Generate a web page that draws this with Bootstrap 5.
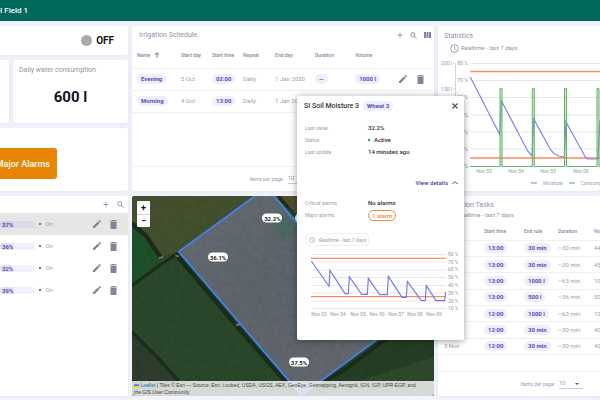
<!DOCTYPE html>
<html lang="en">
<head>
<meta charset="utf-8">
<meta name="viewport" content="width=device-width, initial-scale=1">
<title>SI Field 1</title>
<link href="https://cdn.jsdelivr.net/npm/bootstrap@5.3.0/dist/css/bootstrap.min.css" rel="stylesheet">
<style>
  body { font: 6px/8px Roboto, sans-serif; color: #9c9eb0; background: #f3f4fa; height: 100vh; min-height: 400px; overflow: hidden; }
  svg { display: block; flex: none; }
  .topbar { height: 21px; background: #00695c; color: #fff; font-size: 8px; font-weight: 500; }
  .board { display: grid; flex: 1; min-height: 0; grid-template-columns: 128fr 302fr 162fr; grid-template-rows: 165fr 200fr; gap: 5px 4px; padding: 5px 0 4px; }
  .board > * { min-width: 0; min-height: 0; }
  .panel { background: #fff; border-radius: 3px; box-shadow: 0 1px 4px rgba(70,80,150,.09); overflow: hidden; white-space: nowrap; min-width: 0; }
  .panel.open-left { border-top-left-radius: 0; border-bottom-left-radius: 0; }
  .heading { font-size: 7px; line-height: 10px; font-weight: 400; margin: 0; color: #9294a6; }
  .period { font-size: 6px; line-height: 10px; color: #9294a6; gap: 2px; }
  .ink { color: #15151a; }
  .state { font-size: 10px; line-height: 12px; font-weight: 700; }
  .state-card { padding-right: 14px; }
  .figure-card { padding: 5px 6px 0; }
  .figure-big { font-size: 15px; line-height: 18px; font-weight: 700; margin-top: 13px; }
  .knob { width: 11px; height: 11px; border-radius: 50%; background: #a9a9a9; }
  .summary { display: grid; grid-template-rows: 29fr 63fr 63fr; gap: 5px; }
  .pair { display: grid; grid-template-columns: 9fr 115fr; gap: 4px; min-width: 0; }
  .alarm-btn { background: #e88504; color: #fff; font-size: 9px; line-height: 10px; font-weight: 500; width: 57px; height: 31px; border: 0; border-radius: 0 3px 3px 0; padding: 0 7px 0 0; display: flex; align-items: center; justify-content: flex-end; }
  .icon-btn { border: 0; background: none; padding: 0; color: #7f8699; line-height: 1; display: inline-flex; }
  .grid-table { width: 100%; table-layout: fixed; border-collapse: collapse; margin: 0; }
  .grid-table th { font-weight: 500; font-size: 5px; color: #8688a0; padding: 0; }
  .grid-table td { padding: 0; }
  .grid-table tr { border-bottom: 1px solid #eff0f4; }
  .sched { margin-top: 3px; }
  .sched thead tr { height: 25px; }
  .sched tbody tr { height: 22px; }
  .sched th:first-child, .sched td:first-child { padding-left: 5px; }
  .row-tools { margin-left: -3px; gap: 9px; }
  .tools { gap: 7px; padding: 4px 3px 0 7px; }
  .tasks { width: 200px; height: 132px; margin-top: 3px; }
  .tasks thead tr { height: 17px; }
  .tasks th:first-child, .tasks td:first-child { padding-left: 6px; }
  .tag { display: inline-block; background: #efeefc; color: #5650b4; font-weight: 700; line-height: 10px; border-radius: 5px; padding: 0 4px; }
  .sched .tag, .tasks .tag { min-width: 11px; text-align: center; }
  .pager { border-top: 1px solid #eff0f4; font-size: 5px; padding: 6px 17px 7px 0; }
  .pager.centered { padding-right: 5px; }
  .pager select { font-size: 6px; line-height: 8px; color: inherit; background: none; border: 0; border-bottom: 1px solid #c9cad3; border-radius: 0; appearance: none; padding: 0; width: 24px; height: 11px; }
  .caret { width: 0; height: 0; border: 2px solid transparent; border-top-color: #555; margin: 2px 4px 0 -8px; }
  .zone { height: 22px; padding: 0 10px 0 0; }
  .zone.current { background: #e6e6e6; }
  .meter-box { width: 30%; margin-right: 4px; }
  .level { appearance: none; display: block; width: 100%; height: 7px; border: 0; border-radius: 3px; background: #efeefc; overflow: hidden; }
  .level::-webkit-progress-bar { background: #f1f0fd; }
  .level::-webkit-progress-value { background: #e2e0f8; }
  .current .level::-webkit-progress-bar { background: #dcdbea; }
  .current .level::-webkit-progress-value { background: #cfcee6; }
  .level-text { left: 2px; top: 0; line-height: 7px; font-weight: 700; color: #5650b4; }
  .dot { width: 2px; height: 2px; background: #2e9e50; }
  .plot { font-size: 5px; fill: #9899a8; }
  .stat-head { padding: 5px 0 2px 6px; }
  .legend-row { font-size: 5px; padding: 2px 0 0 93px; gap: 6px; }
  .fieldmap { border-radius: 3px; overflow: hidden; background: #2a4429; }
  .fieldmap > svg { width: 100%; height: 100%; }
  .zoomer { left: 5px; top: 5px; width: 13px; background: #fff; border-radius: 1px; }
  .zoomer button { border: 0; background: none; padding: 0; height: 13px; font-weight: 700; font-size: 9px; line-height: 12px; color: #111; }
  .zoomer button + button { border-top: 1px solid #ccc; }
  .pin { background: #fff; color: #222; font-weight: 700; border-radius: 5px; width: 20px; line-height: 9px; text-align: center; transform: translate(-50%, -50%); }
  .credits { background: rgba(255,255,255,.8); color: #444; font: 5px/7px "Liberation Sans", sans-serif; padding: 1px 8px 0 2px; left: 0; right: 0; bottom: 0; }
  .credits a { color: #0078a8; text-decoration: none; }
  .popup { left: 297px; top: 96px; width: 167px; height: 244px; background: #fff; border-radius: 2px; box-shadow: 0 1px 7px rgba(0,0,0,.4); padding: 4px 6px 0 7px; }
  .popup h2 { font-size: 7px; line-height: 12px; font-weight: 500; margin: 0; color: #33333a; }
  .facts { display: grid; grid-template-columns: 63px 1fr; grid-auto-rows: 12px; align-items: center; margin: 0 0 0 1px; }
  .facts dt { font-weight: 400; font-size: 5px; }
  .facts dd { margin: 0; font-weight: 500; color: #2b2b31; }
  .details { color: #4540a0; font-weight: 500; text-decoration: none; line-height: 12px; }
  .alarm-tag { display: inline-block; border: 1px solid #ee8a3c; color: #ee8a3c; border-radius: 6px; line-height: 9px; padding: 0 3px; font-weight: 500; }
  .range { border: 1px solid #f0f0f4; border-radius: 3px; background: #fff; color: inherit; height: 13px; padding: 0 2px; line-height: 8px; font-size: 5px; margin-left: 2px; }
  .s1 { margin-top: 10px; } .s2 { margin-top: 19px; } .s3 { margin-top: 8px; } .s4 { margin-top: 12px; }
</style>
<script src="https://cdn.jsdelivr.net/npm/bootstrap@5.3.0/dist/js/bootstrap.bundle.min.js"></script>
</head>
<body class="d-flex flex-column">
<svg width="0" height="0" class="position-absolute" aria-hidden="true">
  <symbol id="pencil" viewBox="3 3 18 18"><path fill="currentColor" d="M3 17.25V21h3.75L17.81 9.94l-3.75-3.75L3 17.25zM20.71 7.04a1 1 0 0 0 0-1.41l-2.34-2.34a1 1 0 0 0-1.41 0l-1.83 1.83 3.75 3.75 1.83-1.83z"/></symbol>
  <symbol id="trash" viewBox="3 3 18 18"><path fill="currentColor" d="M6 19c0 1.100.9 2 2 2h8c1.100 0 2-.9 2-2V7H6v12zM19 4h-3.500l-1-1h-5l-1 1H5v2h14V4z"/></symbol>
  <symbol id="plus" viewBox="4 4 16 16"><path fill="currentColor" d="M19 13h-6v6h-2v-6H5v-2h6V5h2v6h6v2z"/></symbol>
  <symbol id="search" viewBox="2 2 19 19"><path fill="currentColor" d="M15.500 14h-.79l-.28-.27A6.470 6.470 0 0 0 16 9.500 6.500 6.500 0 1 0 9.500 16c1.610 0 3.090-.59 4.230-1.570l.27.28v.79l5 4.990L20.490 19l-4.990-5zm-6 0a4.500 4.500 0 1 1 0-9 4.500 4.500 0 0 1 0 9z"/></symbol>
  <symbol id="clock" viewBox="0 0 20 20"><g fill="none" stroke="currentColor" stroke-width="2"><circle cx="10" cy="10" r="8.500"/><path d="M10 5v5.500l4 2.500"/></g></symbol>
</svg>

<header class="topbar d-flex align-items-center flex-shrink-0">I Field 1</header>

<main class="board">
  <section class="summary">
    <div class="panel open-left state-card d-flex align-items-center justify-content-end">
      <span class="knob me-1"></span><span class="state ink">OFF</span>
    </div>
    <div class="pair">
      <div class="panel open-left"></div>
      <div class="panel figure-card">
        <h2 class="heading">Daily water consumption</h2>
        <div class="figure-big ink text-center">600 l</div>
      </div>
    </div>
    <div class="panel open-left d-flex align-items-center pt-2">
      <button class="alarm-btn" type="button">Major Alarms</button>
    </div>
  </section>

  <section class="panel d-flex flex-column">
    <div class="tools d-flex align-items-center">
      <h2 class="heading flex-grow-1">Irrigation Schedule</h2>
      <button class="icon-btn" type="button" aria-label="Add"><svg width="6" height="6"><use href="#plus"/></svg></button>
      <button class="icon-btn" type="button" aria-label="Search"><svg width="7" height="7"><use href="#search"/></svg></button>
      <button class="icon-btn" type="button" aria-label="Columns"><svg width="7" height="6" viewBox="0 0 7 6" fill="currentColor"><path d="M0 0h2v6H0zM2.500 0h2v6h-2zM5 0h2v6H5z"/></svg></button>
    </div>
    <table class="grid-table sched">
      <colgroup><col width="16.200%"><col width="10.300%"><col width="10.300%"><col width="10.600%"><col width="13.200%"><col width="13.300%"><col width="15.600%"><col></colgroup>
      <thead><tr><th><span class="d-inline-flex align-items-center gap-1">Name <svg width="6" height="6" viewBox="0 0 16 16" fill="none" stroke="#55586a" stroke-width="2"><path d="M8 16V2M2 8l6-6 6 6"/></svg></span></th><th>Start day</th><th>Start time</th><th>Repeat</th><th>End day</th><th>Duration</th><th>Volume</th><th></th></tr></thead>
      <tbody>
        <tr><td><span class="tag">Evening</span></td><td>5 Oct</td><td><span class="tag">02:00</span></td><td>Daily</td><td>1 Jan 2030</td><td><span class="tag">—</span></td><td><span class="tag">1000 l</span></td><td><span class="row-tools d-flex"><button class="icon-btn" type="button" aria-label="Edit"><svg width="8" height="8"><use href="#pencil"/></svg></button><button class="icon-btn" type="button" aria-label="Delete"><svg width="9" height="9"><use href="#trash"/></svg></button></span></td></tr>
        <tr><td><span class="tag">Morning</span></td><td>4 Oct</td><td><span class="tag">13:00</span></td><td>Daily</td><td>1 Jan 2030</td><td></td><td></td><td></td></tr>
      </tbody>
    </table>
    <div class="pager centered mt-auto d-flex align-items-center justify-content-center">
      <label for="schedSize" class="me-1">Items per page:</label><select id="schedSize"><option>10</option></select><span class="caret"></span>
    </div>
  </section>

  <section class="panel">
    <h2 class="heading stat-head">Statistics</h2>
    <div class="period d-flex align-items-center ps-2"><svg class="ms-1" width="9" height="9"><use href="#clock"/></svg>Realtime - last 7 days</div>
    <svg class="plot" width="162" height="124" viewBox="438 53 162 124">
      <path d="M470.500 63.500H600M470.500 80.500H600M470.500 97.500H600M470.500 115H600M470.500 132H600M470.500 149H600" stroke="#e8e8ee"/>
      <path d="M453 63.500h2.500V167M453 89h2.500" stroke="#d5d6df" fill="none"/>
      <g text-anchor="end"><text x="452" y="65">200 l</text><text x="452" y="91">150 l</text><text x="468" y="65">80 %</text><text x="468" y="82">70 %</text><text x="468" y="99">60 %</text><text x="468" y="117">50 %</text><text x="468" y="134">40 %</text><text x="468" y="151">30 %</text><text x="468" y="168">20 %</text></g>
      <path d="M470.300 71.500H600M470.300 158H600" stroke="#fb8a5c" stroke-width="1.500"/>
      <path d="M470.300 77L499.700 134.500 501.500 101 527.700 151 532 156 533.700 119 550.700 150 554 153.500 559 156 564.300 157.300 566 122 585.300 157 587.300 159H598L600 120" fill="none" stroke="#8282f0" stroke-width="1.200"/>
      <path d="M470.300 166.500H500V88.500h2v78H532.300V88.500h2v78H564.500V88.500h2v78H597V88.500h2v78h1" fill="#4caf50" fill-opacity=".25" stroke="#61b565"/>
      <g text-anchor="middle"><text x="484" y="173">Nov 03</text><text x="516" y="173">Nov 04</text><text x="548" y="173">Nov 05</text><text x="581" y="173">Nov 06</text></g>
    </svg>
    <div class="legend-row d-flex align-items-center">
      <svg width="6" height="2"><path d="M0 1h6" stroke="#7b7bf0" stroke-width="1"/></svg><span>Moisture</span>
      <svg width="6" height="2"><path d="M0 1h6" stroke="#4caf50" stroke-width="1"/></svg><span>Consumption</span>
    </div>
  </section>

  <section class="panel open-left">
    <div class="d-flex align-items-center justify-content-end pe-1 pt-1 pb-1">
      <button class="icon-btn me-2" type="button" aria-label="Add"><svg width="6" height="9"><use href="#plus"/></svg></button>
      <button class="icon-btn" type="button" aria-label="Search"><svg width="7" height="9"><use href="#search"/></svg></button>
    </div>
    <div id="zones"></div>
  </section>

  <section class="fieldmap position-relative">
    <svg viewBox="6 78 906 600" preserveAspectRatio="none">
      <defs>
        <linearGradient id="soil" x1="0" y1="0" x2="1" y2="1"><stop offset="0" stop-color="#646c74"/><stop offset=".4" stop-color="#5e646c"/><stop offset="1" stop-color="#63676d"/></linearGradient>
        <pattern id="rows" width="9" height="40" patternUnits="userSpaceOnUse" patternTransform="rotate(-34)"><path d="M2 0v40" stroke="#fff" stroke-opacity=".05" stroke-width="2"/><path d="M6 0v40" stroke="#000" stroke-opacity=".06" stroke-width="2"/></pattern>
        <pattern id="crop" width="11" height="40" patternUnits="userSpaceOnUse" patternTransform="rotate(55)"><path d="M2 0v40" stroke="#fff" stroke-opacity=".02" stroke-width="4"/></pattern>
        <radialGradient id="wet"><stop offset="0" stop-color="#3d6b59" stop-opacity=".8"/><stop offset="1" stop-color="#3d6b59" stop-opacity="0"/></radialGradient>
        <filter id="grain"><feTurbulence type="fractalNoise" baseFrequency=".06" numOctaves="4"/><feColorMatrix values="0 0 0 0 0  0 0 0 0 0  0 0 0 0 0  1.200 0 0 0 -.45"/></filter>
      </defs>
      <rect x="6" y="78" width="906" height="600" fill="#294629"/>
      <path d="M6 78H375L150 240 90 265 6 160z" fill="#424f2d"/>
      <path d="M6 165L95 265 6 345z" fill="#1c4f27"/>
      <path d="M6 488L150 640V678H6z" fill="#2c3b2b"/>
      <path d="M432 78H912V480L774 485z" fill="#524d2e"/>
      <path d="M500 678L740 510H912V678z" fill="#233c23"/>
      <path d="M545 678L912 560V678z" fill="#2d472a"/>
      <path d="M6 78H912V678H6z" fill="url(#crop)"/>
      <g fill="none" stroke="#1a2d1a"><path d="M6 160L50 200 92 262" stroke-width="13"/><path d="M6 347L90 285 146 250 375 84" stroke-width="9"/><path d="M6 486L80 560 145 632" stroke-width="10"/><path d="M140 256L330 480 490 662" stroke-width="13"/><path d="M560 650L650 595 770 505" stroke-width="12"/><path d="M444 78L520 165" stroke-width="10"/></g>
      <path d="M86 265l14-4M318 466l12-4M136 256l10 4" stroke="#7a7258" stroke-width="6"/>
      <path d="M375 78H432L774 485 514 676 146 245z" fill="url(#soil)"/>
      <ellipse cx="470" cy="165" rx="75" ry="60" fill="url(#wet)"/>
      <path d="M375 78H432L774 485 514 676 146 245z" fill="url(#rows)"/>
      <rect x="6" y="78" width="906" height="600" filter="url(#grain)" opacity=".1"/>
      <path d="M375 78L146 245 514 676 774 485 432 78" fill="none" stroke="#3a86f5" stroke-width="5"/>
    </svg>
    <div class="zoomer position-absolute d-flex flex-column"><button type="button" aria-label="Zoom in">+</button><button type="button" aria-label="Zoom out">−</button></div>
    <span class="pin position-absolute" style="left:46.500%;top:10.800%">32.2%</span>
    <span class="pin position-absolute" style="left:28.500%;top:30.500%">36.1%</span>
    <span class="pin position-absolute" style="left:55.300%;top:83%">37.5%</span>
    <span class="pin position-absolute" style="left:57.400%;top:10.800%">34.0%</span>
    <div class="credits position-absolute"><a href="#"><svg class="d-inline-block" width="5" height="4" viewBox="0 0 12 8"><path fill="#4C7BE1" d="M0 0h12v4H0z"/><path fill="#FFD500" d="M0 4h12v4H0z"/></svg> Leaflet</a> | Tiles © Esri — Source: Esri, i-cubed, USDA, USGS, AEX, GeoEye, Getmapping, Aerogrid, IGN, IGP, UPR-EGP, and<br>the GIS User Community</div>
  </section>

  <section class="panel d-flex flex-column">
    <h2 class="heading mt-1 ps-2">Irrigation Tasks</h2>
    <div class="period d-flex align-items-center ps-1 ms-1"><svg width="9" height="9"><use href="#clock"/></svg>Realtime - last 7 days</div>
    <table class="grid-table tasks">
      <colgroup><col width="23%"><col width="20%"><col width="17%"><col width="18%"><col></colgroup>
      <thead><tr><th>Day</th><th>Start time</th><th>End rule</th><th>Duration</th><th>Volume</th></tr></thead>
      <tbody id="tasks"></tbody>
    </table>
    <div class="pager mt-auto d-flex align-items-center justify-content-end">
      <label for="taskSize" class="me-1">Items per page:</label><select id="taskSize"><option>10</option></select><span class="caret"></span>
    </div>
  </section>
</main>

<aside class="popup position-absolute" aria-label="Sensor">
  <div class="d-flex align-items-center"><h2>SI Soil Moisture 3</h2><span class="tag ms-1">Wheat 3</span>
    <button class="icon-btn ms-auto" type="button" aria-label="Close"><svg width="6" height="6" viewBox="0 0 12 12" stroke="#555" stroke-width="2.500"><path d="M1 1l10 10M11 1L1 11"/></svg></button></div>
  <dl class="facts s1"><dt>Last value</dt><dd>32.2%</dd><dt>Status</dt><dd class="d-flex align-items-center gap-1"><span class="dot"></span>Active</dd><dt>Last update</dt><dd>14 minutes ago</dd></dl>
  <div class="s2 d-flex align-items-center justify-content-end gap-1"><a class="details" href="#">View details</a><svg width="6" height="6" viewBox="0 0 12 12" fill="none" stroke="#4540a0" stroke-width="2"><path d="M1 8l5-5 5 5"/></svg></div>
  <dl class="facts s3"><dt>Critical alarms</dt><dd>No alarms</dd><dt>Major alarms</dt><dd><span class="alarm-tag">1 alarm</span></dd></dl>
  <button type="button" class="range s4 d-flex align-items-center gap-1"><svg width="6" height="6"><use href="#clock"/></svg>Realtime - last 7 days</button>
  <svg class="plot" width="154" height="74" viewBox="304 246 154 74">
    <path d="M311 254.500H446M311 262H446M311 270H446M311 277.500H446M311 285.500H446M311 293H446M311 301H446M311 308.500H446" stroke="#e8e8ee"/>
    <path d="M311 258.300H445.500M311 296.700H445.500" stroke="#fb8a5c" stroke-width="1.300"/>
    <path transform="translate(290 215) scale(.3333)" d="M64 138L117 214 120 166 165 236H175L178 185 215 238H232L235 190 269 239H292L295 184 336 247H349L352 199 394 257H406L409 212 438 257H464L467 231" fill="none" stroke="#7777f2" stroke-width="3.500"/>
    <text x="448" y="256">80 %</text><text x="448" y="264">70 %</text><text x="448" y="271">60 %</text><text x="448" y="279">50 %</text><text x="448" y="287">40 %</text><text x="448" y="295">30 %</text><text x="448" y="303">20 %</text><text x="448" y="310">10 %</text>
    <g text-anchor="middle"><text x="319" y="316">Nov 03</text><text x="338" y="316">Nov 04</text><text x="358" y="316">Nov 05</text><text x="377" y="316">Nov 06</text><text x="396" y="316">Nov 07</text><text x="415" y="316">Nov 08</text><text x="434" y="316">Nov 09</text></g>
  </svg>
</aside>

<script>
  document.getElementById('zones').innerHTML = [37, 36, 32, 39].map((v, i) => `
    <div class="zone d-flex align-items-center ${i ? '' : 'current'}">
      <div class="meter-box position-relative"><progress class="level" max="100" value="${v}" aria-label="Moisture"></progress><span class="level-text position-absolute">${v}%</span></div>
      <span class="dot me-1"></span><span class="flex-grow-1">On</span>
      <button class="icon-btn me-2" type="button" aria-label="Edit"><svg width="8" height="8"><use href="#pencil"/></svg></button>
      <button class="icon-btn" type="button" aria-label="Delete"><svg width="9" height="9"><use href="#trash"/></svg></button>
    </div>`).join('');
  document.getElementById('tasks').innerHTML = [
    ['9 Nov', '13:00', '30 min', '~30 min', '447 l'], ['8 Nov', '13:00', '30 min', '~30 min', '452 l'],
    ['7 Nov', '13:00', '1000 l', '~63 min', '1000 l'], ['6 Nov', '13:00', '500 l', '~36 min', '500 l'],
    ['5 Nov', '12:00', '1000 l', '~63 min', '1000 l'], ['4 Nov', '12:00', '30 min', '~30 min', '401 l'],
    ['3 Nov', '12:00', '30 min', '~30 min', '420 l']
  ].map(r => `<tr><td>${r[0]}</td><td><span class="tag">${r[1]}</span></td><td><span class="tag">${r[2]}</span></td><td>${r[3]}</td><td>${r[4]}</td></tr>`).join('');
</script>
</body>
</html>
